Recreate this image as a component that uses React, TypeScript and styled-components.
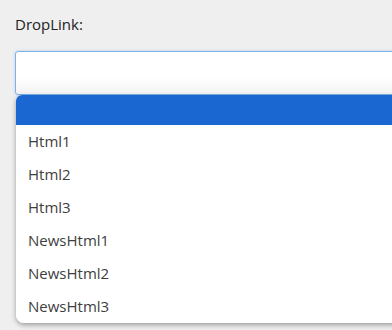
import React from 'react';
import styled, { createGlobalStyle } from 'styled-components';

const options = ['Html1', 'Html2', 'Html3', 'NewsHtml1', 'NewsHtml2', 'NewsHtml3'];

const GlobalStyle = createGlobalStyle`
  html, body {
    margin: 0;
    padding: 0;
    background: #efefef;
    overflow: hidden;
  }
  body {
    font-family: "Open Sans", "Noto Sans", sans-serif;
  }
`;

const App: React.FC = () => {
  return (
    <Page>
      <GlobalStyle />
      <Label>DropLink:</Label>
      <Field>
        <Input />
        <List>
          <Option selected />
          {options.map((o) => (
            <Option key={o}>{o}</Option>
          ))}
        </List>
      </Field>
    </Page>
  );
};

export default App;

const Page = styled.div`
  padding: 14px 0 0 15px;
  width: 100vw;
  height: 100vh;
  box-sizing: border-box;
  overflow: hidden;
`;

const Label = styled.div`
  font-size: 15px;
  line-height: 21px;
  color: #222;
  margin-bottom: 16px;
`;

const Field = styled.div`
  display: flex;
  flex-direction: column;
  width: calc(100% + 20px);
`;

const Input = styled.div`
  height: 42px;
  border: 1px solid #7db2e6;
  border-radius: 3px;
  background: linear-gradient(#ffffff 60%, #f3f3f3);
  box-shadow: 0 0 3px rgba(90, 150, 220, 0.35);
`;

const List = styled.div`
  margin-left: 1px;
  display: flex;
  flex-direction: column;
  background: #fff;
  border-radius: 6px 0 0 8px;
  overflow: hidden;
  box-shadow: 0 2px 5px rgba(0, 0, 0, 0.35);
`;

const Option = styled.div<{ selected?: boolean }>`
  height: ${(p) => (p.selected ? '30px' : '33px')};
  line-height: 33px;
  padding-left: 12px;
  font-size: 15px;
  color: #3e3e3e;
  background: ${(p) => (p.selected ? '#1a67d2' : '#fff')};
`;
